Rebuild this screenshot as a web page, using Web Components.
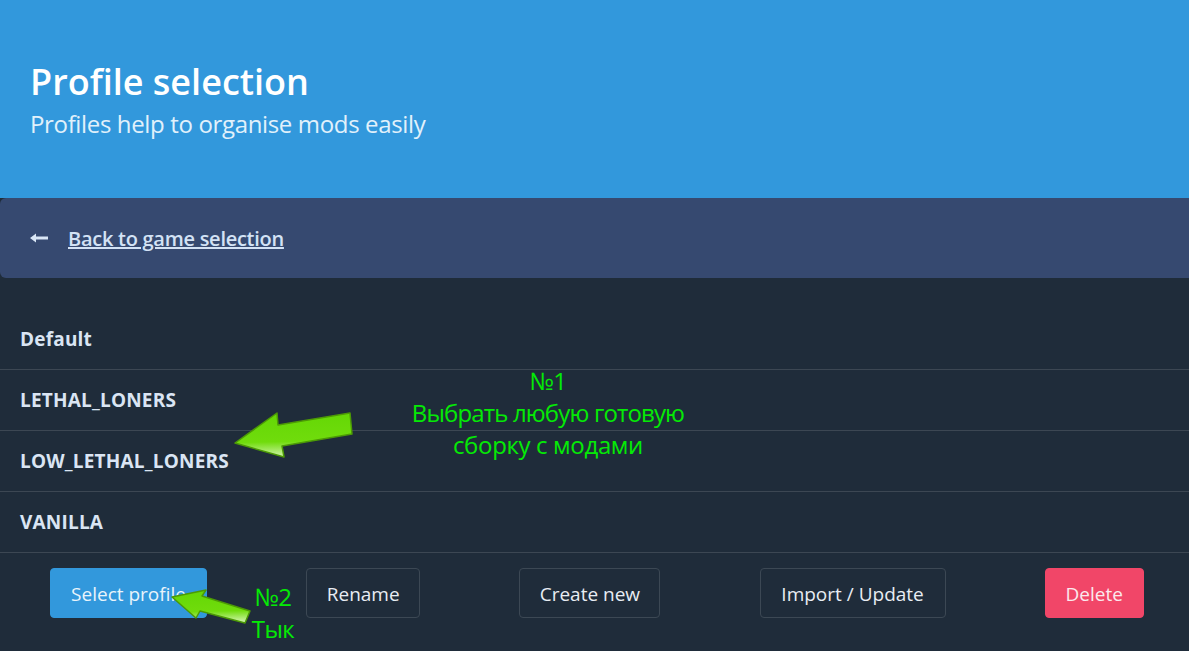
<!DOCTYPE html>
<html>
<head>
<meta charset="utf-8">
<style>
html, body { margin: 0; height: 100%; background: #1f2c3a; overflow: hidden; }
body { font-family: 'Open Sans', 'Noto Sans', sans-serif; }
</style>
</head>
<body>
<mod-page>
  <hero-banner slot="hero" title="Profile selection" subtitle="Profiles help to organise mods easily"></hero-banner>
  <back-bar slot="back" text="Back to game selection"></back-bar>
  <profile-row slot="rows" text="Default"></profile-row>
  <profile-row slot="rows" text="LETHAL_LONERS"></profile-row>
  <profile-row slot="rows" text="LOW_LETHAL_LONERS"></profile-row>
  <profile-row slot="rows" text="VANILLA"></profile-row>
  <action-button slot="actions" kind="info" text="Select profile" width="157"></action-button>
  <action-button slot="actions" text="Rename" width="114"></action-button>
  <action-button slot="actions" text="Create new" width="141"></action-button>
  <action-button slot="actions" text="Import / Update" width="186"></action-button>
  <action-button slot="actions" kind="danger" text="Delete" width="99"></action-button>
  <green-arrow slot="notes" style="left:236px;top:410px" w="118" h="48" points="-1,33 41,3 42,15 114,3 116,24 46,36 48,47"></green-arrow>
  <green-arrow slot="notes" style="left:172px;top:588px" w="80" h="36" points="0,9 34,2 30,8 78,23 73,35 28,23 24,30"></green-arrow>
  <green-note slot="notes" style="left:348px;top:365px;width:400px">№1<br><span style="letter-spacing:-0.85px">Выбрать любую готовую</span><br><span style="letter-spacing:-0.35px">сборку с модами</span></green-note>
  <green-note slot="notes" style="left:223px;top:581px;width:100px">№2<br>Тык</green-note>
</mod-page>
<script>
const shadow = (el, html) => {
  const root = document.createElement('template');
  root.innerHTML = html;
  el.attachShadow({mode: 'open'}).appendChild(root.content.cloneNode(true));
};

customElements.define('mod-page', class extends HTMLElement {
  connectedCallback() {
    shadow(this, `<style>
      :host { display: flex; flex-direction: column; height: 651px; position: relative; overflow: hidden; }
      .rows { display: flex; flex-direction: column; padding-top: 31px; }
      .actions { display: flex; gap: 99.2px; padding: 15px 0 0 50px; }
    </style>
    <slot name="hero"></slot>
    <slot name="back"></slot>
    <div class="rows"><slot name="rows"></slot></div>
    <div class="actions"><slot name="actions"></slot></div>
    <slot name="notes"></slot>`);
  }
});

customElements.define('hero-banner', class extends HTMLElement {
  connectedCallback() {
    shadow(this, `<style>
      :host { display: flex; flex-direction: column; justify-content: center; gap: 5px; box-sizing: border-box; height: 198px; padding: 0 30px; background: #3298dc; }
      h1 { margin: 0; color: #fff; font-size: 36px; font-weight: 600; line-height: 45px; }
      p { margin: 0; color: #e1f1fb; font-size: 24px; line-height: 30px; letter-spacing: -0.35px; }
    </style>
    <h1>${this.getAttribute('title')}</h1>
    <p>${this.getAttribute('subtitle')}</p>`);
  }
});

customElements.define('back-bar', class extends HTMLElement {
  connectedCallback() {
    shadow(this, `<style>
      :host { display: flex; align-items: center; gap: 20px; box-sizing: border-box; height: 80px; padding-left: 30px; background: #364970; border-radius: 6px 0 0 6px; }
      svg { display: block; width: 18px; height: 12px; }
      a { color: #d3e2f5; font-size: 20px; font-weight: 600; letter-spacing: -0.27px; text-decoration: underline; }
    </style>
    <svg viewBox="0 0 18 12"><path d="M0 6 6 1.5V4.5H18V7.5H6V10.5Z" fill="#d9e6f6"/></svg>
    <a href="#">${this.getAttribute('text')}</a>`);
  }
});

customElements.define('profile-row', class extends HTMLElement {
  connectedCallback() {
    shadow(this, `<style>
      :host { display: flex; align-items: center; box-sizing: border-box; height: 61px; padding-left: 20px; border-bottom: 1px solid #3c4753; color: #dae5f3; font-size: 19px; font-weight: 700; letter-spacing: 0.2px; }
    </style>
    <span>${this.getAttribute('text')}</span>`);
  }
});

customElements.define('action-button', class extends HTMLElement {
  connectedCallback() {
    const kind = this.getAttribute('kind') || 'plain';
    shadow(this, `<style>
      :host { display: block; }
      button { display: block; box-sizing: border-box; height: 50px; width: ${this.getAttribute('width')}px; padding: 1px 0 0; border: 1px solid #3c4854; border-radius: 4px; background: transparent; color: #e8edf3; font: 400 19px 'Open Sans', 'Noto Sans', sans-serif; }
      button.info { background: #3298dc; border-color: #3298dc; color: #e9f4fb; }
      button.danger { background: #f14668; border-color: #f14668; color: #fbe9ed; }
    </style>
    <button class="${kind}">${this.getAttribute('text')}</button>`);
  }
});

customElements.define('green-arrow', class extends HTMLElement {
  connectedCallback() {
    const w = this.getAttribute('w'), h = this.getAttribute('h');
    const id = 'g' + w;
    shadow(this, `<style>
      :host { display: block; position: absolute; }
      svg { display: block; overflow: visible; }
    </style>
    <svg width="${w}" height="${h}" viewBox="0 0 ${w} ${h}">
      <defs><linearGradient id="${id}" x1="0.55" y1="0.1" x2="0.6" y2="1">
        <stop offset="0" stop-color="#66d806"/><stop offset="0.6" stop-color="#70dc0c"/><stop offset="1" stop-color="#d6f5b4"/>
      </linearGradient></defs>
      <polygon points="${this.getAttribute('points')}" fill="url(#${id})" stroke="#4c9a05" stroke-width="1.5" stroke-linejoin="round"/>
    </svg>`);
  }
});

customElements.define('green-note', class extends HTMLElement {
  connectedCallback() {
    shadow(this, `<style>
      :host { display: block; position: absolute; text-align: center; color: #05ea05; font-size: 24px; line-height: 32px; letter-spacing: -0.6px; }
    </style>
    <slot></slot>`);
  }
});
</script>
</body>
</html>
